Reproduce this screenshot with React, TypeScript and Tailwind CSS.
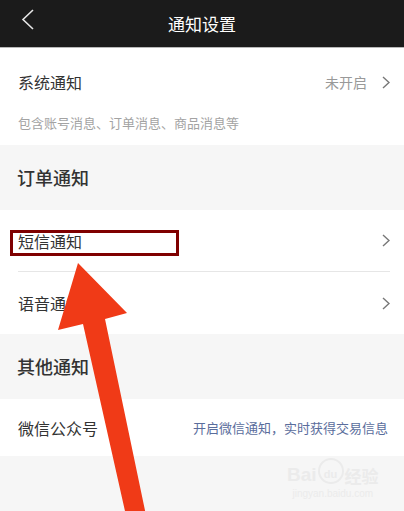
const font = { fontFamily: '"Noto Sans CJK SC", "Noto Sans", sans-serif' };

function Chevron() {
  return (
    <svg width="8" height="13" viewBox="0 0 8 13" className="shrink-0">
      <path d="M1 1l6 5.5L1 12" fill="none" stroke="#777" strokeWidth="1.4" />
    </svg>
  );
}

function Row({ label, right, last }: { label: string; right?: React.ReactNode; last?: boolean }) {
  return (
    <div className="bg-white">
      <div
        className={
          "ml-[18px] mr-[14px] h-[62px] flex items-center justify-between " +
          (last ? "" : "border-b border-[#e6e6e6]")
        }
      >
        <span className="text-[16px] text-[#333]">{label}</span>
        {right ?? <Chevron />}
      </div>
    </div>
  );
}

function SectionTitle({ title }: { title: string }) {
  return (
    <div className="h-[65px] flex items-center pl-[17px] bg-[#f6f6f6]">
      <span className="text-[18px] font-medium text-[#333]">{title}</span>
    </div>
  );
}

export default function App() {
  return (
    <div className="relative w-[404px] h-[511px] overflow-hidden bg-[#f6f6f6]" style={font}>
      {/* header */}
      <div className="h-[48px] bg-[#1b1b1b] flex items-center justify-center relative border-b border-[#b8b8b8]">
        <svg width="14" height="22" viewBox="0 0 14 22" className="absolute left-[21px] top-[9px]">
          <path d="M12 1L2 10.5 12 20" fill="none" stroke="#e6e6e6" strokeWidth="1.6" />
        </svg>
        <span className="text-[17px] text-white">通知设置</span>
      </div>

      {/* system */}
      <div className="bg-white pl-[18px] pr-[14px] pt-[22px] pb-[11px] h-[97px]">
        <div className="flex items-center justify-between h-[24px]">
          <span className="text-[16px] text-[#333]">系统通知</span>
          <div className="flex items-center gap-[15px]">
            <span className="text-[14px] text-[#999]">未开启</span>
            <Chevron />
          </div>
        </div>
        <div className="mt-[19px] text-[13px] leading-[20px] text-[#a3a3a3]">包含账号消息、订单消息、商品消息等</div>
      </div>

      <SectionTitle title="订单通知" />
      <Row label="短信通知" />
      <Row label="语音通知" last />

      <SectionTitle title="其他通知" />
      <div className="bg-white h-[57px] flex items-center justify-between pl-[18px] pr-[16px]">
        <span className="text-[16px] text-[#333]">微信公众号</span>
        <span className="text-[13px] text-[#5a6d9c]">开启微信通知，实时获得交易信息</span>
      </div>

      {/* watermark */}
      <div className="absolute left-[287px] top-[458px] flex flex-col items-center text-[#ebebeb]" style={{ fontFamily: '"Liberation Sans", sans-serif' }}>
        <div className="flex items-end gap-[1px]">
          <span className="text-[19px] font-bold leading-none">Bai</span>
          <span className="w-[26px] h-[26px] rounded-full border-2 border-[#ebebeb] flex items-end justify-center text-[11px] font-bold leading-[16px]">du</span>
          <span className="text-[17px] font-bold leading-none" style={font}>经验</span>
        </div>
        <span className="text-[10px] leading-[14px] mt-[3px]">jingyan.baidu.com</span>
      </div>

      {/* annotation box */}
      <div className="absolute left-[10px] top-[230px] w-[169px] h-[26px] border-[3px] border-[#7f0000]" />

      {/* annotation arrow */}
      <svg className="absolute left-0 top-0" width="404" height="511" viewBox="0 0 404 511">
        <polygon points="78,263 127,313 105,319 147,520 127,520 83,324 58,330" fill="#f03a17" />
      </svg>
    </div>
  );
}
